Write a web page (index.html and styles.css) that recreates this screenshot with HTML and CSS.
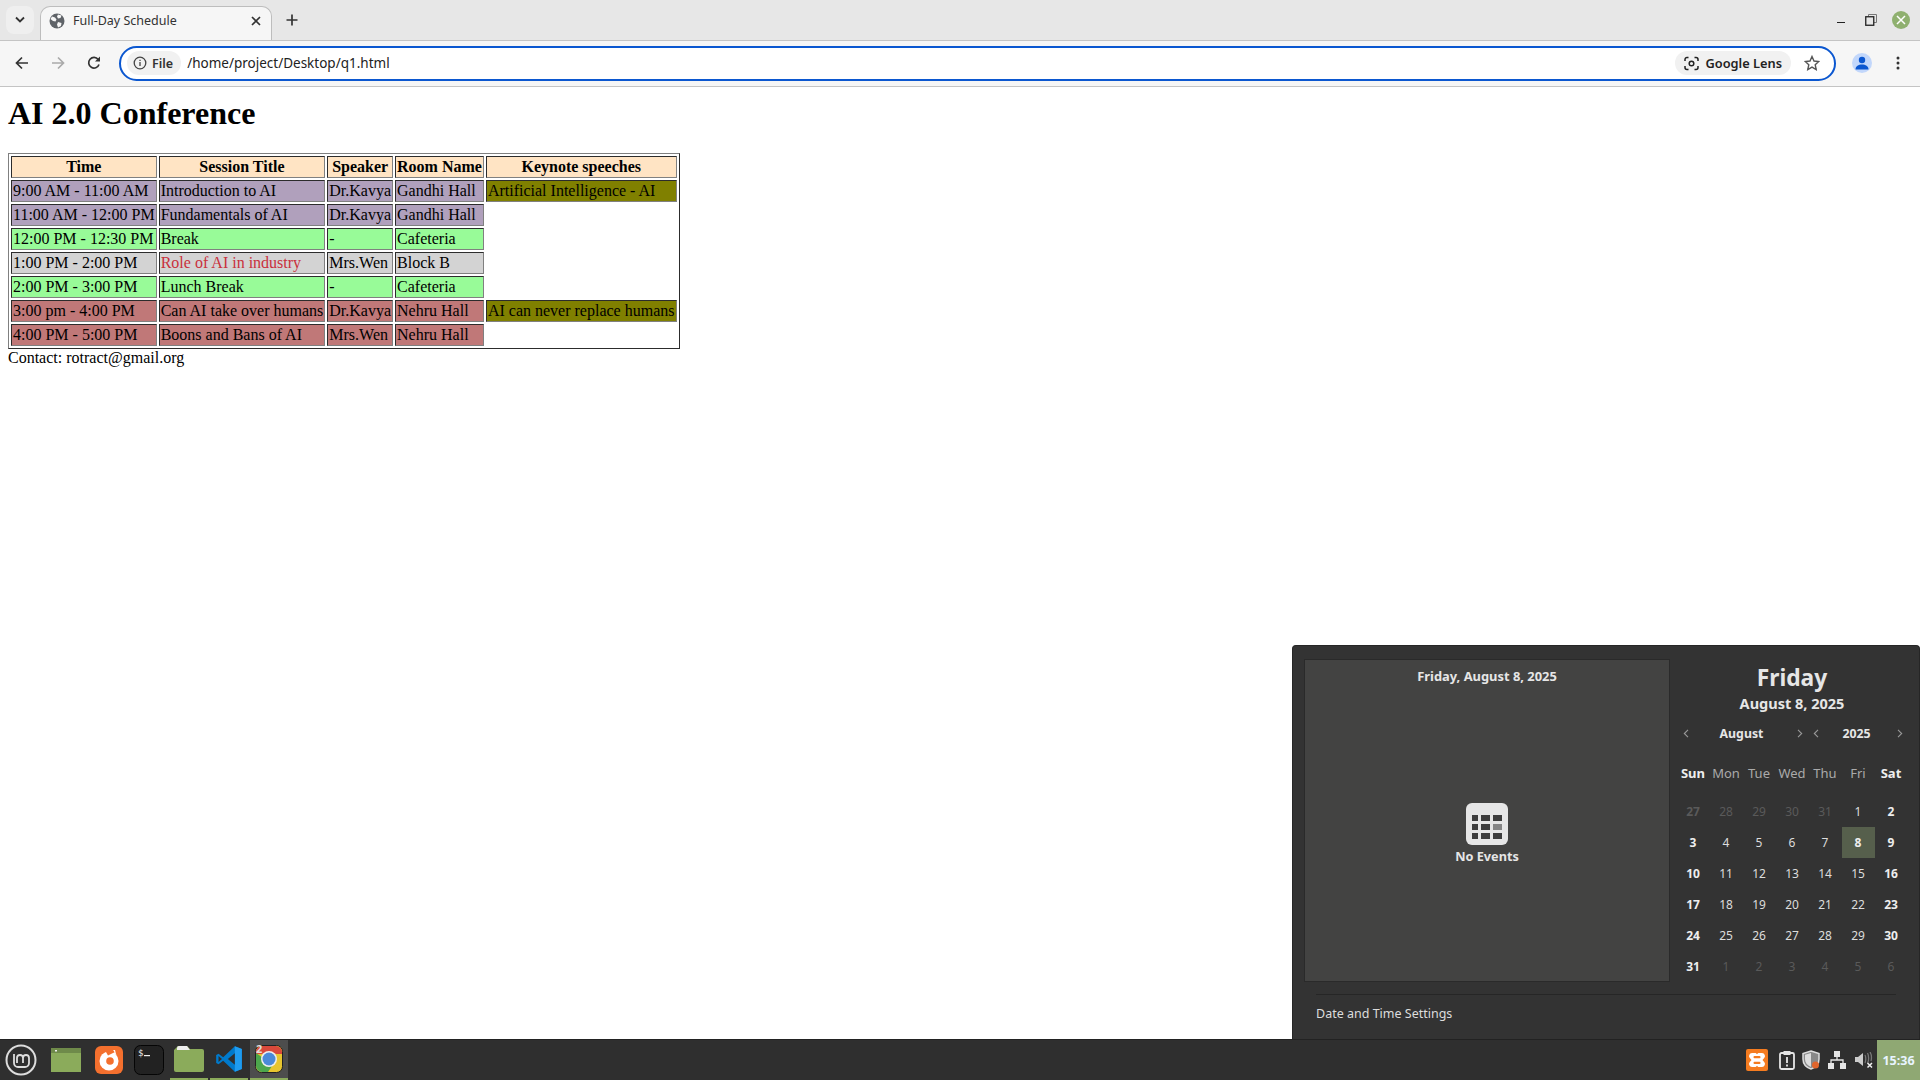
FILE: index.html
```html
<!DOCTYPE html>
<html lang="en">
<head>
    <meta charset="UTF-8">
    <title>Full-Day Schedule</title>
    <link rel="stylesheet" href="styles.css">
</head>
<body>
<div class="screen">

    <div class="tabstrip">
        <div class="tab-search">
            <svg width="12" height="8" viewBox="0 0 12 8"><path d="M2 1.500l4 4 4-4" fill="none" stroke="#333" stroke-width="1.800"/></svg>
        </div>
        <div class="tab">
            <svg class="tab-globe" width="16" height="16" viewBox="0 0 16 16"><circle cx="8" cy="8" r="7.500" fill="#5f6368"/><path d="M3 3.500l3 1 1.500 2-1 2-2.500-.5-2.500-2zM9 1.500l3.500 1-1 2.500-2.500.5-1-2zM9 9l3.500 1-.5 3-3 1.500-1-3z" fill="#f6f6f6"/></svg>
            <span class="tab-title">Full-Day Schedule</span>
            <svg class="tab-close" width="10" height="10" viewBox="0 0 10 10"><path d="M1 1l8 8M9 1l-8 8" stroke="#333" stroke-width="1.700"/></svg>
        </div>
        <svg class="tab-new" width="12" height="12" viewBox="0 0 12 12"><path d="M6 .5v11M.5 6h11" stroke="#333" stroke-width="1.700"/></svg>
        <div class="window-controls">
            <span class="win-min"></span>
            <svg width="12" height="12" viewBox="0 0 12 12"><path d="M3.500 2.500V.5h8v8H9" fill="none" stroke="#777"/><rect x=".75" y="2.750" width="8" height="8.500" fill="none" stroke="#222" stroke-width="1.300"/></svg>
            <span class="win-close"><svg width="10" height="10" viewBox="0 0 10 10"><path d="M1 1l8 8M9 1l-8 8" stroke="#fff" stroke-width="1.500"/></svg></span>
        </div>
    </div>

    <div class="toolbar">
        <svg class="nav-icon" width="14" height="14" viewBox="0 0 14 14"><path d="M13 7H2M7 1.500L1.500 7 7 12.500" fill="none" stroke="#333" stroke-width="1.700"/></svg>
        <svg class="nav-icon" width="14" height="14" viewBox="0 0 14 14"><path d="M1 7h11M7 1.500L12.500 7 7 12.500" fill="none" stroke="#aaa" stroke-width="1.700"/></svg>
        <svg class="nav-icon" width="14" height="14" viewBox="0 0 14 14"><path d="M12 8.500A5.300 5.300 0 1 1 11.200 3.500" fill="none" stroke="#333" stroke-width="1.700"/><path d="M13 .5v5H8z" fill="#333"/></svg>
        <div class="omnibox">
            <div class="file-chip">
                <svg width="14" height="14" viewBox="0 0 14 14"><circle cx="7" cy="7" r="5.800" fill="none" stroke="#444" stroke-width="1.300"/><path d="M7 6v4M7 3.800v1.200" stroke="#444" stroke-width="1.300"/></svg>
                <span>File</span>
            </div>
            <span class="url">/home/project/Desktop/q1.html</span>
            <div class="lens-chip">
                <svg width="15" height="15" viewBox="0 0 15 15"><path d="M1 5V3.500A2 2 0 0 1 3 1.500h1.500M10.500 1.500H12a2 2 0 0 1 2 2V5M14 10v1.500a2 2 0 0 1-2 2h-1.500M4.500 13.500H3a2 2 0 0 1-2-2V10" fill="none" stroke="#222" stroke-width="1.500"/><circle cx="7.500" cy="7.500" r="2.300" fill="none" stroke="#222" stroke-width="1.500"/></svg>
                <span>Google Lens</span>
            </div>
            <svg class="star" width="16" height="16" viewBox="0 0 16 16"><path d="M8 1.500l2 4.500 4.800.5-3.600 3.200 1 4.800L8 12.100l-4.200 2.400 1-4.800L1.200 6.500 6 6z" fill="none" stroke="#555" stroke-width="1.400"/></svg>
        </div>
        <span class="avatar"><svg width="14" height="14" viewBox="0 0 14 14"><circle cx="7" cy="4" r="3.200" fill="#0b57d0"/><path d="M.5 13.500c0-3.500 3-5 6.500-5s6.500 1.500 6.500 5z" fill="#0b57d0"/></svg></span>
        <svg class="menu-dots" width="4" height="14" viewBox="0 0 4 14"><circle cx="2" cy="2" r="1.500" fill="#333"/><circle cx="2" cy="7" r="1.500" fill="#333"/><circle cx="2" cy="12" r="1.500" fill="#333"/></svg>
    </div>

    <div class="content">
        <div class="page">
            <h1>AI 2.0 Conference</h1>
            <table class="schedule">
                <tr class="head">
                    <th>Time</th><th>Session Title</th><th>Speaker</th><th>Room Name</th><th>Keynote speeches</th>
                </tr>
                <tr class="purple">
                    <td>9:00 AM - 11:00 AM</td><td>Introduction to AI</td><td>Dr.Kavya</td><td>Gandhi Hall</td><td class="keynote">Artificial Intelligence - AI</td>
                </tr>
                <tr class="purple">
                    <td>11:00 AM - 12:00 PM</td><td>Fundamentals of AI</td><td>Dr.Kavya</td><td>Gandhi Hall</td>
                </tr>
                <tr class="green">
                    <td>12:00 PM - 12:30 PM</td><td>Break</td><td>-</td><td>Cafeteria</td>
                </tr>
                <tr class="grey">
                    <td>1:00 PM - 2:00 PM</td><td class="industry">Role of AI in industry</td><td>Mrs.Wen</td><td>Block B</td>
                </tr>
                <tr class="green">
                    <td>2:00 PM - 3:00 PM</td><td>Lunch Break</td><td>-</td><td>Cafeteria</td>
                </tr>
                <tr class="red">
                    <td>3:00 pm - 4:00 PM</td><td>Can AI take over humans</td><td>Dr.Kavya</td><td>Nehru Hall</td><td class="keynote">AI can never replace humans</td>
                </tr>
                <tr class="red">
                    <td>4:00 PM - 5:00 PM</td><td>Boons and Bans of AI</td><td>Mrs.Wen</td><td>Nehru Hall</td>
                </tr>
            </table>
            <div>Contact: rotract@gmail.org</div>
        </div>

        <div class="popup">
            <div class="popup-main">
                <div class="events">
                    <div class="events-date">Friday, August 8, 2025</div>
                    <div class="no-events">
                        <svg width="42" height="42" viewBox="0 0 42 42">
                            <rect width="42" height="42" rx="6" fill="#e6e6e6"/>
                            <g fill="#3d3d3d">
                                <rect x="6" y="12" width="6" height="6"/><rect x="15" y="12" width="9" height="6"/><rect x="27" y="12" width="9" height="6"/>
                                <rect x="6" y="21" width="6" height="6"/><rect x="15" y="21" width="9" height="6"/>
                                <rect x="6" y="30" width="6" height="6"/><rect x="15" y="30" width="9" height="6"/><rect x="27" y="30" width="9" height="6"/>
                            </g>
                            <rect x="27" y="21" width="9" height="6" fill="#858585"/>
                        </svg>
                        <span>No Events</span>
                    </div>
                </div>
                <div class="calendar">
                    <div class="cal-day">Friday</div>
                    <div class="cal-date">August 8, 2025</div>
                    <div class="cal-nav">
                        <svg class="chev" width="6" height="9" viewBox="0 0 6 9"><path d="M5 .8L1.300 4.500 5 8.200" fill="none" stroke="#999" stroke-width="1.100"/></svg>
                        <b>August</b>
                        <svg class="chev" width="6" height="9" viewBox="0 0 6 9"><path d="M1 .8l3.700 3.700L1 8.200" fill="none" stroke="#999" stroke-width="1.100"/></svg>
                        <svg class="chev" width="6" height="9" viewBox="0 0 6 9"><path d="M5 .8L1.300 4.500 5 8.200" fill="none" stroke="#999" stroke-width="1.100"/></svg>
                        <b>2025</b>
                        <svg class="chev" width="6" height="9" viewBox="0 0 6 9"><path d="M1 .8l3.700 3.700L1 8.200" fill="none" stroke="#999" stroke-width="1.100"/></svg>
                    </div>
                    <div class="cal-grid">
                        <span class="wd bold">Sun</span><span class="wd">Mon</span><span class="wd">Tue</span><span class="wd">Wed</span><span class="wd">Thu</span><span class="wd">Fri</span><span class="wd bold">Sat</span>
                        <span class="bold dim">27</span><span class="dim">28</span><span class="dim">29</span><span class="dim">30</span><span class="dim">31</span><span>1</span><span class="bold">2</span>
                        <span class="bold">3</span><span>4</span><span>5</span><span>6</span><span>7</span><span class="bold today">8</span><span class="bold">9</span>
                        <span class="bold">10</span><span>11</span><span>12</span><span>13</span><span>14</span><span>15</span><span class="bold">16</span>
                        <span class="bold">17</span><span>18</span><span>19</span><span>20</span><span>21</span><span>22</span><span class="bold">23</span>
                        <span class="bold">24</span><span>25</span><span>26</span><span>27</span><span>28</span><span>29</span><span class="bold">30</span>
                        <span class="bold">31</span><span class="dim">1</span><span class="dim">2</span><span class="dim">3</span><span class="dim">4</span><span class="dim">5</span><span class="dim">6</span>
                    </div>
                </div>
            </div>
            <div class="popup-footer">Date and Time Settings</div>
        </div>
    </div>

    <div class="taskbar">
        <div class="launcher">
            <svg class="app-mint" width="32" height="32" viewBox="0 0 32 32"><circle cx="16" cy="16" r="14.500" fill="none" stroke="#ddd" stroke-width="2"/><path d="M9 10v9a4 4 0 0 0 4 4h7a4 4 0 0 0 4-4v-5a3 3 0 0 0-6 0v5M18 14a3 3 0 0 0-6 0v5" fill="none" stroke="#ddd" stroke-width="1.800"/></svg>
            <svg class="app-desktop" width="30" height="24" viewBox="0 0 30 24"><rect width="30" height="24" fill="#8bab5b"/><rect width="30" height="5" fill="#6f8a4a"/><rect x="4" y="2" width="2" height="1.500" fill="#eee"/></svg>
            <svg class="app-firefox" width="28" height="28" viewBox="0 0 28 28"><rect width="28" height="28" rx="6" fill="#f4702e"/><circle cx="14" cy="15" r="9.500" fill="#fff"/><circle cx="15" cy="15" r="3.800" fill="#f4702e"/><path d="M9.500 3.500l3.500 6 5-2.500.5-4z" fill="#f4702e"/><path d="M18 4c2 1.500 1.500 3.500 0 5l3-1-1-4z" fill="#fff"/></svg>
            <svg class="app-terminal" width="30" height="30" viewBox="0 0 30 30"><rect x=".5" y=".5" width="29" height="29" rx="6" fill="#222" stroke="#050505"/><text x="4" y="11" class="term-text">$</text><rect x="10" y="10" width="6" height="1.200" fill="#eee"/></svg>
            <div class="running app-folder">
                <svg width="30" height="26" viewBox="0 0 30 26"><path d="M4 0h9l3 3h12a2 2 0 0 1 2 2v19a2 2 0 0 1-2 2H2a2 2 0 0 1-2-2V4z" fill="#8bab5b"/><path d="M3 4V2a2 2 0 0 1 2-2h8l3 4z" fill="#eee"/></svg>
            </div>
            <div class="running">
                <svg width="28" height="28" viewBox="0 0 24 24"><path d="M17 1L7 10.500 3 7.500 1 8.500v7l2 1 4-3L17 23l6-2.500v-17z" fill="#007acc"/><path d="M17 1l6 2.500v17L17 23z" fill="#1f9cf0"/><path d="M17 7l-6 5 6 5z" fill="#2f2f2f"/><path d="M3 9.500L6 12l-3 2.500z" fill="#2f2f2f"/></svg>
            </div>
            <div class="running app-chrome">
                <svg width="28" height="28" viewBox="0 0 28 28">
                    <rect x=".5" y=".5" width="27" height="27" rx="6" fill="#e8c52f" stroke="#222"/>
                    <path d="M1 9V7a6 6 0 0 1 6-6h14a6 6 0 0 1 6 6v2H14z" fill="#d9493b"/>
                    <path d="M1 8v13a6 6 0 0 0 6 6h6l6-9-8-3z" fill="#4ca64c"/>
                    <circle cx="14" cy="14" r="8" fill="#eee"/><circle cx="14" cy="14" r="6.500" fill="#4a8ad8"/>
                </svg>
                <span class="chrome-badge">2</span>
            </div>
        </div>
        <div class="tray">
            <svg class="tray-xampp" width="22" height="22" viewBox="0 0 22 22"><rect width="22" height="22" rx="2" fill="#f57c20"/><path d="M6 4h3c1 0 1.500.7 2 1.300.5-.6 1-1.300 2-1.300h3a3 3 0 0 1 2 5.200L16.500 11l1.500 1.800A3 3 0 0 1 16 18h-3c-1 0-1.500-.7-2-1.300-.5.6-1 1.300-2 1.300H6a3 3 0 0 1-2-5.200L5.500 11 4 9.200A3 3 0 0 1 6 4z" fill="#fff"/><rect x="7.500" y="7" width="7" height="2.200" rx="1" fill="#f57c20"/><rect x="7.500" y="12.800" width="7" height="2.200" rx="1" fill="#f57c20"/></svg>
            <svg class="tray-clip" width="18" height="20" viewBox="0 0 18 20"><rect x="2" y="3" width="14" height="16" rx="1.500" fill="none" stroke="#e6e6e6" stroke-width="1.800"/><rect x="5.500" y="1" width="7" height="4" fill="#e6e6e6"/><path d="M9 7v6M9 14.500v2" stroke="#e6e6e6" stroke-width="1.800"/></svg>
            <svg class="tray-shield" width="18" height="20" viewBox="0 0 18 20"><path d="M9 1l8 2.500V9c0 5-3.500 8.500-8 10C4.500 17.500 1 14 1 9V3.500z" fill="#888" stroke="#ddd" stroke-width="1.500"/><path d="M9 3v14C5 15.500 3 12.500 3 9V4.800z" fill="#ddd"/><circle cx="13.500" cy="15" r="3.500" fill="#e0652c"/></svg>
            <svg class="tray-net" width="18" height="18" viewBox="0 0 18 18"><g fill="#e6e6e6"><rect x="6" y="0" width="6" height="6"/><rect x="0" y="12" width="6" height="6"/><rect x="12" y="12" width="6" height="6"/></g><path d="M9 6v3M3 12V9h12v3" fill="none" stroke="#e6e6e6" stroke-width="1.300"/></svg>
            <svg class="tray-vol" width="18" height="16" viewBox="0 0 18 16"><path d="M0 5h3l5-4v13l-5-4H0z" fill="#ccc"/><path d="M10 3c1 1.500 1 6 0 8M12.500 1c1.500 2.500 1.500 8 0 10M15 0c1.500 2.500 1.500 7 1 9" fill="none" stroke="#777" stroke-width="1.300"/><path d="M12.500 11l4.500 4.500M17 11l-4.500 4.500" stroke="#eee" stroke-width="1.500"/></svg>
            <div class="clock">15:36</div>
        </div>
    </div>

</div>
</body>
</html>
```

FILE: styles.css
```css
html, body {
    margin: 0;
    padding: 0;
}
.screen {
    width: 1920px;
    height: 1080px;
    display: flex;
    flex-direction: column;
    overflow: hidden;
    font-family: "Noto Sans", sans-serif;
}

/* tab strip */
.tabstrip {
    height: 40px;
    flex: none;
    display: flex;
    align-items: flex-start;
    background-color: #e7e7e7;
    box-sizing: border-box;
    padding: 6px 0 0 6px;
}
.tab-search {
    width: 28px;
    height: 28px;
    border-radius: 8px;
    background-color: #efefef;
    display: flex;
    justify-content: center;
    align-items: center;
}
.tab {
    width: 232px;
    height: 34px;
    margin-left: 6px;
    box-sizing: border-box;
    padding: 0 10px 6px 8px;
    display: flex;
    align-items: center;
    background-color: #f6f6f6;
    border: 1px solid #bdbdbd;
    border-bottom: none;
    border-radius: 10px 10px 0 0;
}
.tab-title {
    margin-left: 8px;
    flex: 1;
    font-size: 12.5px;
    color: #333;
}
.tab-new {
    margin: 8px 0 0 14px;
}
.window-controls {
    margin-left: auto;
    display: flex;
    align-items: center;
    height: 28px;
    margin-right: 10px;
}
.win-min {
    width: 8px;
    height: 1px;
    background-color: #222;
    margin-top: 4px;
    margin-right: 20px;
}
.win-close {
    width: 18px;
    height: 18px;
    border-radius: 50%;
    background-color: #8fb06f;
    margin-left: 15px;
    display: flex;
    justify-content: center;
    align-items: center;
}

/* toolbar */
.toolbar {
    height: 47px;
    flex: none;
    box-sizing: border-box;
    display: flex;
    align-items: center;
    padding: 0 20px 1px 15px;
    background-color: #f6f6f6;
    border-top: 1px solid #c4c4c4;
    border-bottom: 1px solid #c4c4c4;
}
.nav-icon {
    margin-right: 22px;
}
.nav-icon:nth-child(3) {
    margin-right: 18px;
}
.omnibox {
    width: 1717px;
    height: 35px;
    flex: none;
    box-sizing: border-box;
    display: flex;
    align-items: center;
    padding: 0 14px 0 6px;
    background-color: #fff;
    border: 2px solid #0b57d0;
    border-radius: 18px;
}
.file-chip {
    display: flex;
    align-items: center;
    gap: 5px;
    height: 24px;
    padding: 0 8px 0 6px;
    border-radius: 12px;
    background-color: #f1f1f1;
    font-size: 12.5px;
    font-weight: 600;
    color: #333;
}
.url {
    margin-left: 6px;
    flex: 1;
    font-size: 13.5px;
    color: #222;
}
.lens-chip {
    display: flex;
    align-items: center;
    gap: 7px;
    height: 24px;
    padding: 0 9px;
    border-radius: 12px;
    background-color: #f1f1f1;
    font-size: 12.8px;
    font-weight: 600;
    color: #222;
}
.star {
    margin-left: 13px;
}
.avatar {
    width: 20px;
    height: 20px;
    margin-left: 16px;
    border-radius: 50%;
    background-color: #c2d7fb;
    display: flex;
    justify-content: center;
    align-items: center;
}
.menu-dots {
    margin-left: 24px;
}

/* page content */
.content {
    flex: 1;
    position: relative;
    background-color: #fff;
}
.page {
    padding: 8px;
    font-family: "Liberation Serif", serif;
    font-size: 16px;
    color: #000;
}
h1 {
    margin: 0 0 21px;
    font-size: 32px;
}
.schedule {
    border: 1px outset #808080;
    border-spacing: 2px;
}
.schedule th,
.schedule td {
    border: 1px inset #808080;
    padding: 1px;
}
.head th {
    background-color: #ffe4c4;
}
.purple td {
    background-color: #b0a0bc;
}
.green td {
    background-color: #98fb98;
}
.grey td {
    background-color: #d3d3d3;
}
.red td {
    background-color: #c07878;
}
.schedule .keynote {
    background-color: #808000;
}
.industry {
    color: #c9303c;
}

/* calendar popup */
.popup {
    position: absolute;
    right: 0;
    bottom: 0;
    width: 628px;
    height: 394px;
    box-sizing: border-box;
    display: flex;
    flex-direction: column;
    background-color: #333;
    border: 1px solid #262626;
    border-bottom: none;
    border-radius: 4px 4px 0 0;
    color: #e6e6e6;
}
.popup-main {
    height: 323px;
    display: flex;
    padding: 13px 0 0 11px;
}
.events {
    width: 366px;
    height: 323px;
    box-sizing: border-box;
    display: flex;
    flex-direction: column;
    align-items: center;
    background-color: #434342;
    border: 1px solid #2a2a2a;
}
.events-date {
    margin-top: 8px;
    font-size: 12.9px;
    font-weight: 700;
    line-height: 17px;
}
.no-events {
    margin-top: 118px;
    display: flex;
    flex-direction: column;
    align-items: center;
    gap: 3px;
    font-size: 12.7px;
    font-weight: 700;
    line-height: 17px;
}
.calendar {
    width: 231px;
    margin-left: 6.5px;
    display: flex;
    flex-direction: column;
    align-items: center;
}
.cal-day {
    margin-top: 4px;
    font-size: 22.8px;
    font-weight: 700;
    line-height: 30px;
}
.cal-date {
    font-size: 14.5px;
    font-weight: 700;
    line-height: 20px;
}
.cal-nav {
    width: 100%;
    margin-top: 10px;
    height: 20px;
    display: grid;
    grid-template-columns: 18px 94px 22px 10px 72px 14px;
    justify-items: center;
    align-items: center;
    font-size: 12.3px;
}
.cal-grid {
    margin-top: 6px;
    width: 100%;
    display: grid;
    grid-template-columns: repeat(7, 33px);
    grid-template-rows: 47px;
    grid-auto-rows: 31px;
    font-size: 12px;
    color: #ddd;
}
.cal-grid span {
    display: flex;
    justify-content: center;
    align-items: center;
}
.cal-grid .wd {
    font-size: 13px;
    color: #aaa;
}
.cal-grid .bold {
    font-weight: 700;
    color: #eee;
}
.cal-grid .dim {
    color: #5a5a5a;
}
.cal-grid .today {
    background-color: #565f4c;
}
.popup-footer {
    margin: 12px 23px 0;
    padding-top: 9px;
    border-top: 1px solid #262626;
    font-size: 12.5px;
    line-height: 20px;
    color: #ddd;
}

/* taskbar */
.taskbar {
    height: 41px;
    flex: none;
    box-sizing: border-box;
    display: flex;
    justify-content: space-between;
    align-items: center;
    background-color: #2f2f2f;
    border-top: 1px solid #222;
}
.launcher {
    display: flex;
    align-items: center;
    height: 40px;
}
.app-mint {
    margin-left: 5px;
}
.app-desktop {
    margin-left: 14px;
}
.app-firefox {
    margin-left: 14px;
}
.app-terminal {
    margin-left: 11px;
}
.running {
    position: relative;
    width: 38px;
    height: 40px;
    margin-left: 2px;
    box-sizing: border-box;
    display: flex;
    justify-content: center;
    align-items: center;
    border-bottom: 2px solid #8bab5b;
}
.running.app-folder {
    margin-left: 6px;
}
.term-text {
    font-family: "DejaVu Sans Mono", monospace;
    font-size: 9px;
    fill: #eee;
}
.app-chrome {
    background-color: #4d4d4d;
}
.chrome-badge {
    position: absolute;
    left: 6px;
    top: 1px;
    font-size: 11px;
    font-weight: 700;
    color: #ddd;
}
.tray {
    display: flex;
    align-items: center;
    height: 40px;
}
.tray-clip {
    margin-left: 10px;
}
.tray-shield {
    margin-left: 6px;
}
.tray-net {
    margin-left: 8px;
}
.tray-vol {
    margin-left: 9px;
}
.clock {
    width: 43px;
    height: 40px;
    margin-left: 4px;
    display: flex;
    justify-content: center;
    align-items: center;
    background-color: #8fa873;
    font-size: 12.5px;
    font-weight: 700;
    color: #e8f4ff;
}
```
